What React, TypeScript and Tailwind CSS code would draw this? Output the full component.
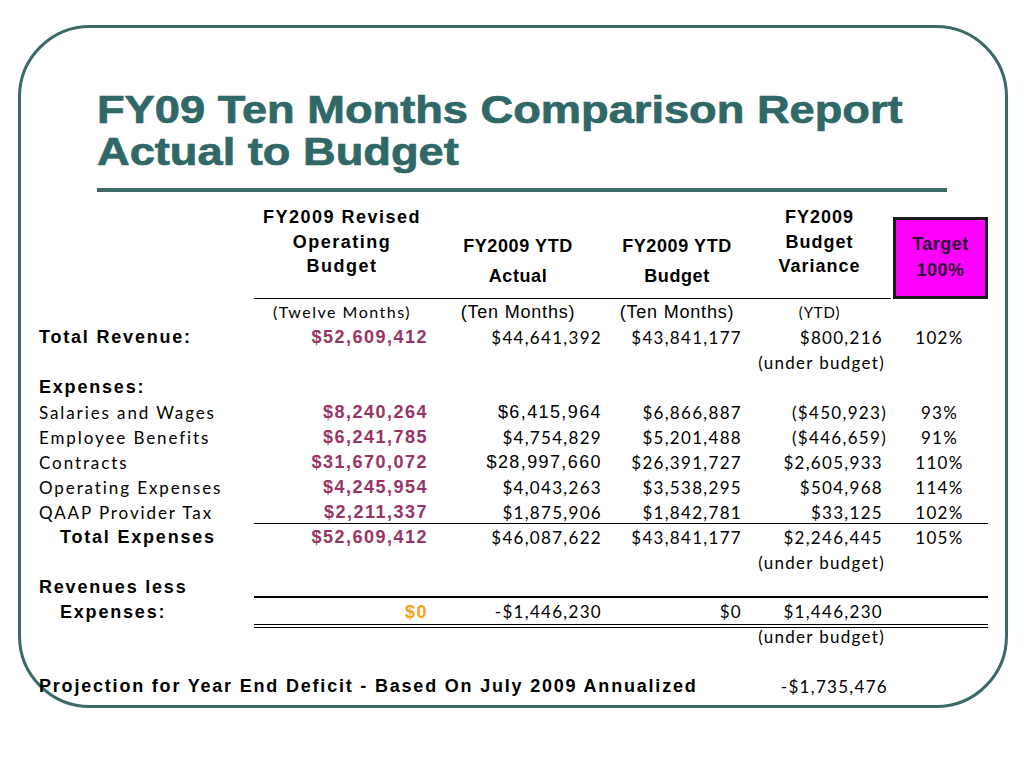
import React from "react";

const A = "font-['Liberation_Sans',Arial,sans-serif]";
const C = "font-['Lato','Carlito',sans-serif]";
const GRID = "grid grid-cols-[215px_176px_176px_142px_143px_97px]";

const boldLabel = `${A} font-bold text-[18px] tracking-[1.8px] text-black whitespace-nowrap`;
const regLabel = `${C} text-[17px] tracking-[1.9px] text-black whitespace-nowrap`;
const mag = `${A} font-bold text-[18px] tracking-[1.5px] text-[#993366] text-right pr-[2px]`;
const cal = `${C} text-[17px] tracking-[1.3px] text-black text-right whitespace-nowrap`;
const ari = `${A} text-[18px] tracking-[1.4px] text-black text-right whitespace-nowrap`;
const pct = `${C} text-[17px] tracking-[1.3px] text-black text-center`;

type RowProps = {
  label?: React.ReactNode;
  labelCls?: string;
  c1?: React.ReactNode;
  c1Cls?: string;
  c2?: React.ReactNode;
  c2Cls?: string;
  c3?: React.ReactNode;
  c3Cls?: string;
  c4?: React.ReactNode;
  c4Cls?: string;
  c5?: React.ReactNode;
  rowCls?: string;
};

function Row({
  label,
  labelCls = regLabel,
  c1,
  c1Cls = mag,
  c2,
  c2Cls = `${cal} pr-[4px]`,
  c3,
  c3Cls = `${cal} pr-[6px]`,
  c4,
  c4Cls = `${cal} pr-[8px]`,
  c5,
  rowCls = "",
}: RowProps) {
  return (
    <div className={`${GRID} h-[25px] leading-[25px] ${rowCls}`}>
      <div className={labelCls}>{label}</div>
      <div className={c1Cls}>{c1}</div>
      <div className={c2Cls}>{c2}</div>
      <div className={c3Cls}>{c3}</div>
      <div className={c4Cls}>{c4}</div>
      <div className={pct}>{c5}</div>
    </div>
  );
}

export default function App() {
  return (
    <div className="w-[1024px] h-[768px] bg-white overflow-hidden pt-[25px] pl-[18px]">
      <div className="w-[990px] h-[683px] border-[3px] border-[#3a6a68] rounded-[72px]">
        {/* Title */}
        <div className="mt-[61px] pl-[76px]">
          <div
            className={`${A} font-bold text-[38px] leading-[42px] text-[#2f6866] [-webkit-text-stroke:0.7px_#2f6866] origin-left scale-x-[1.19] whitespace-nowrap`}
          >
            <div>FY09 Ten Months Comparison Report</div>
            <div>Actual to Budget</div>
          </div>
          <div className="mt-[15px] h-[4px] w-[850px] bg-[#3b6c6a]" />
        </div>

        {/* Table */}
        <div className="pl-[18px]">
          {/* header */}
          <div className={`${GRID} h-[107px]`}>
            <div />
            <div
              className={`${A} font-bold text-[18px] tracking-[1.5px] leading-[24.5px] text-center pt-[13px] border-b border-black`}
            >
              <div>FY2009 Revised</div>
              <div>Operating</div>
              <div>Budget</div>
            </div>
            <div
              className={`${A} font-bold text-[18px] tracking-[0.6px] leading-[30px] text-center pt-[39px] border-b border-black`}
            >
              <div>FY2009 YTD</div>
              <div>Actual</div>
            </div>
            <div
              className={`${A} font-bold text-[18px] tracking-[0.6px] leading-[30px] text-center pt-[39px] border-b border-black`}
            >
              <div>FY2009 YTD</div>
              <div>Budget</div>
            </div>
            <div
              className={`${A} font-bold text-[18px] tracking-[1px] leading-[24.5px] text-center pt-[13px] border-b border-black`}
            >
              <div>FY2009</div>
              <div>Budget</div>
              <div>Variance</div>
            </div>
            <div className="pl-[2px]">
              <div
                className={`${A} font-bold text-[18px] tracking-[0.5px] leading-[26px] text-center text-[#2a0a2e] mt-[25px] h-[82px] border-[3px] border-[#1c1a1c] bg-[#ff00ff] pt-[11px]`}
              >
                <div>Target</div>
                <div>100%</div>
              </div>
            </div>
          </div>

          {/* subheader */}
          <div className={`${GRID} h-[26px] leading-[26px]`}>
            <div />
            <div className={`${C} text-[16px] tracking-[1.5px] text-center`}>(Twelve Months)</div>
            <div className={`${A} text-[18px] tracking-[0.8px] text-center`}>(Ten Months)</div>
            <div className={`${A} text-[18px] tracking-[0.8px] text-center`}>(Ten Months)</div>
            <div className={`${C} text-[15px] tracking-[0.8px] text-center`}>(YTD)</div>
            <div />
          </div>

          <Row
            label="Total Revenue:"
            labelCls={boldLabel}
            c1="$52,609,412"
            c2="$44,641,392"
            c3="$43,841,177"
            c4="$800,216"
            c5="102%"
          />
          <Row c4="(under budget)" c4Cls={`${cal} pr-[6px]`} />
          <Row label="Expenses:" labelCls={boldLabel} />
          <Row
            label="Salaries and Wages"
            c1="$8,240,264"
            c2="$6,415,964"
            c2Cls={`${ari} pr-[4px]`}
            c3="$6,866,887"
            c4="($450,923)"
            c4Cls={`${cal} pr-[4px]`}
            c5="93%"
          />
          <Row
            label="Employee Benefits"
            c1="$6,241,785"
            c2="$4,754,829"
            c3="$5,201,488"
            c4="($446,659)"
            c4Cls={`${cal} pr-[4px]`}
            c5="91%"
          />
          <Row
            label="Contracts"
            c1="$31,670,072"
            c2="$28,997,660"
            c2Cls={`${ari} pr-[4px]`}
            c3="$26,391,727"
            c4="$2,605,933"
            c5="110%"
          />
          <Row
            label="Operating Expenses"
            c1="$4,245,954"
            c2="$4,043,263"
            c3="$3,538,295"
            c4="$504,968"
            c5="114%"
          />
          <Row
            label="QAAP Provider Tax"
            c1="$2,211,337"
            c2="$1,875,906"
            c3="$1,842,781"
            c4="$33,125"
            c5="102%"
          />
          <div className={`${GRID}`}>
            <div />
            <div className="col-span-5 h-px bg-black -mt-[2px] mb-[1px]" />
          </div>
          <Row
            label={<span className="pl-[21px]">Total Expenses</span>}
            labelCls={boldLabel}
            c1="$52,609,412"
            c2="$46,087,622"
            c3="$43,841,177"
            c4="$2,246,445"
            c5="105%"
          />
          <Row c4="(under budget)" c4Cls={`${cal} pr-[6px]`} />
          <Row label="Revenues less" labelCls={boldLabel} />
          <div className={`${GRID}`}>
            <div />
            <div className="col-span-5 h-[2px] bg-black -mt-[4px] mb-[2px]" />
          </div>
          <div className={`${GRID} h-[24px] leading-[24px]`}>
            <div className={boldLabel}>
              <span className="pl-[21px]">Expenses:</span>
            </div>
            <div className={`${mag} text-[#f7a11a] border-b-[4px] border-double border-black`}>$0</div>
            <div className={`${cal} pr-[4px] border-b-[4px] border-double border-black`}>-$1,446,230</div>
            <div className={`${cal} pr-[6px] border-b-[4px] border-double border-black`}>$0</div>
            <div className={`${cal} pr-[8px] border-b-[4px] border-double border-black`}>$1,446,230</div>
            <div className="border-b-[4px] border-double border-black" />
          </div>
          <Row c4="(under budget)" c4Cls={`${cal} pr-[6px]`} />
          <Row />
          <div className={`${GRID} h-[25px] leading-[25px]`}>
            <div className={`${boldLabel} col-span-4 -mr-[8px]`}>
              Projection for Year End Deficit - Based On July 2009 Annualized
            </div>
            <div className={`${cal} pr-[3px]`}>-$1,735,476</div>
            <div />
          </div>
        </div>
      </div>
    </div>
  );
}
